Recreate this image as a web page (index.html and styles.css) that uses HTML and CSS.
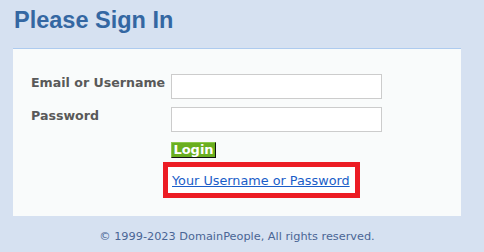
FILE: index.html
```html
<!DOCTYPE html>
<html>
<head>
<meta charset="utf-8">
<link rel="stylesheet" href="styles.css">
</head>
<body>
<div class="page">
  <h1 class="title">Please Sign In</h1>
  <div class="panel">
    <form class="form">
      <label class="label">Email or Username</label>
      <input class="field" type="text">
      <label class="label">Password</label>
      <input class="field" type="password">
      <span></span>
      <div class="actions">
        <button class="btn" type="button">Login</button>
        <div class="highlight"><a class="link" href="#">Your Username or Password</a></div>
      </div>
    </form>
  </div>
  <p class="footer">© 1999-2023 DomainPeople, All rights reserved.</p>
</div>
</body>
</html>
```
FILE: styles.css
```css
html, body {
  margin: 0;
  padding: 0;
  background: #d6e1f1;
}
body {
  font-family: "DejaVu Sans", Verdana, sans-serif;
}
.page {
  width: 448px;
  margin-left: 13px;
  padding-top: 6px;
}
.title {
  margin: 0 0 14px 1px;
  font-family: "Liberation Sans", Arial, sans-serif;
  font-size: 23.5px;
  line-height: 28px;
  font-weight: bold;
  color: #3467a2;
}
.panel {
  background: #f9fbfb;
  border-top: 1px solid #aecbef;
  padding: 25px 18px 18px 18px;
}
.form {
  display: grid;
  grid-template-columns: 140px 211px;
  row-gap: 8px;
  margin: 0;
}
.label {
  font-size: 12.6px;
  font-weight: bold;
  line-height: 16px;
  color: #595959;
  padding-top: 1px;
}
.field {
  box-sizing: border-box;
  width: 211px;
  height: 25px;
  margin: 0;
  border: 1px solid #cccccc;
  background: #ffffff;
  padding: 0 4px;
}
.actions {
  display: flex;
  flex-direction: column;
  align-items: flex-start;
  padding-top: 2px;
}
.btn {
  box-sizing: border-box;
  height: 16px;
  width: 45px;
  margin: 0;
  padding: 0;
  font-family: "DejaVu Sans", Verdana, sans-serif;
  font-size: 13px;
  font-weight: bold;
  line-height: 14px;
  color: #ffffff;
  background: #6aae1f;
  border: 1px solid;
  border-color: #8cc84a #111111 #111111 #8cc84a;
}
.highlight {
  margin-top: 4px;
  margin-left: -8px;
  border: 5px solid #ec1c24;
  padding: 5px 5px 4px 4px;
  background: #ffffff;
  line-height: 16px;
}
.link {
  font-size: 12.8px;
  color: #1a5dc8;
  text-decoration: underline;
}
.footer {
  margin: 14px 0 0 0;
  text-align: center;
  font-size: 11.3px;
  line-height: 14px;
  color: #4a6595;
}
```
